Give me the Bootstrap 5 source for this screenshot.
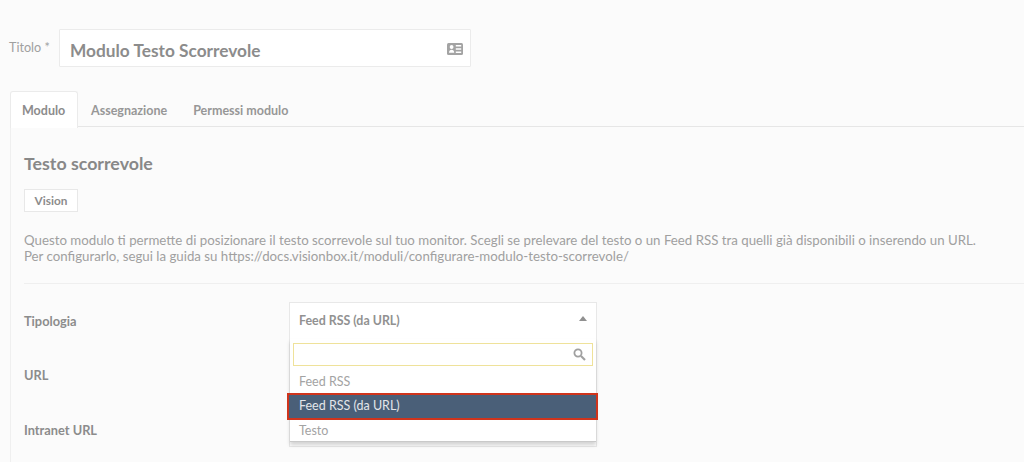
<!DOCTYPE html>
<html lang="it">
<head>
<meta charset="utf-8">
<title>Modulo Testo Scorrevole</title>
<link href="https://cdn.jsdelivr.net/npm/bootstrap@5.3.0/dist/css/bootstrap.min.css" rel="stylesheet">
<style>
html,body{height:462px;overflow:hidden}
body{background:#fbfbfb;font-family:Lato,"Liberation Sans",sans-serif;color:#8a8a8a;font-size:13px;padding:29px 0 0 9px}
.title-row{height:38px;margin-bottom:24px}
.title-label{width:50px;font-size:12.6px;color:#a0a0a0;padding-top:1px}
.title-box{width:412px;height:38px;background:#fff;border:1px solid #ebebeb;padding:0 7px 0 10px;font-size:17.3px;font-weight:700;color:#8c8c8c;border-radius:1px}
.title-text{padding-top:5px}
.title-icon{margin-top:2px}
.tabbar{height:36px;border-bottom:1px solid #e6e6e6;margin-left:1px}
.tabitem{padding:0 11px;line-height:37px;font-size:12.5px;font-weight:700;color:#979797;height:36px;margin-right:2px;border:1px solid transparent;border-bottom:0}
.tabitem.on{background:#fff;border-color:#ebebeb;border-radius:3px 3px 0 0;height:37px;width:68px;margin-right:1px;position:relative;z-index:1;padding:0 11px;color:#8c8c8c}
.panel{margin-left:1px;border-left:1px solid #efefef;padding:26px 0 0 13px}
.panel-title{font-size:17.8px;font-weight:700;color:#888;line-height:20px;margin:0 0 16px}
.tagbox{width:54px;height:23px;line-height:22px;background:#fff;border:1px solid #e8e8e8;font-weight:700;font-size:11.8px;color:#8c8c8c;text-align:center;margin-bottom:20px}
.intro{font-size:13.27px;line-height:16px;color:#a0a0a0;margin:0 0 19px;white-space:nowrap}
.sep{border-top:1px solid #efefef;margin:0 0 18px}
.field{height:54.5px;font-weight:700;font-size:12.8px;color:#8c8c8c}
.field-label{width:265px;padding-top:10px;line-height:17px}
.field-label.low{padding-top:11px}
.select-box{width:308px;height:38px;position:relative;background:#fff;border:1px solid #e8e8e8;font-size:12.4px;color:#919191;padding:0 9px}
.select-text{line-height:36px}
.caret-up{width:0;height:0;border-left:4px solid transparent;border-right:4px solid transparent;border-bottom:5px solid #909090;position:absolute;right:9px;top:13px}
.under-box{position:absolute;left:-1px;top:-1px;width:308px;height:145px;border:1px solid #e8e8e8;z-index:2;pointer-events:none}
.drop-menu{position:absolute;left:0;top:36px;width:306px;height:103px;background:#fff;border-bottom:1px solid #c9c9c9;box-shadow:0 3px 4px rgba(0,0,0,.16);z-index:3;padding:4px 3px 0;font-weight:400}
.drop-search{height:23px;border:1px solid #efe29a;background:#fff;margin-bottom:4px;position:relative}
.drop-search svg{position:absolute;right:6px;top:4px}
.drop-opt{line-height:24px;height:24px;padding-left:6px;color:#a3a3a3;font-size:12.5px}
.drop-opt.sel{background:#4a5f78;color:#e3e6ea;outline:2px solid #d0341c;outline-offset:-1px;height:25px;margin:0 -4px 0 -5px;padding-left:11px;position:relative}
</style>
</head>
<body>
<div class="title-row d-flex align-items-center">
  <div class="title-label">Titolo *</div>
  <div class="title-box d-flex align-items-center justify-content-between">
    <span class="title-text">Modulo Testo Scorrevole</span>
    <svg class="title-icon" width="16" height="12" viewBox="0 0 16 12" aria-hidden="true"><rect width="16" height="12" rx="1.5" fill="#a3a3a3"/><circle cx="4.6" cy="4" r="1.9" fill="#fff"/><path d="M2 9.8c0-2 1.1-3 2.6-3s2.6 1 2.6 3z" fill="#fff"/><path d="M8.8 2.7h5.4M8.8 6h5.4M8.8 9.3h5.4" stroke="#fff" stroke-width="1.4"/></svg>
  </div>
</div>
<div class="tabbar d-flex">
  <div class="tabitem on">Modulo</div>
  <div class="tabitem">Assegnazione</div>
  <div class="tabitem">Permessi modulo</div>
</div>
<div class="panel">
  <h2 class="panel-title">Testo scorrevole</h2>
  <div class="tagbox">Vision</div>
  <p class="intro">Questo modulo ti permette di posizionare il testo scorrevole sul tuo monitor. Scegli se prelevare del testo o un Feed RSS tra quelli già disponibili o inserendo un URL.<br>Per configurarlo, segui la guida su https://docs.visionbox.it/moduli/configurare-modulo-testo-scorrevole/</p>
  <div class="sep"></div>
  <div class="field d-flex">
    <div class="field-label low">Tipologia</div>
    <div class="select-box">
      <div class="select-text">Feed RSS (da URL)</div>
      <span class="caret-up"></span>
      <span class="under-box"></span>
      <div class="drop-menu">
        <div class="drop-search"><svg width="13" height="13" viewBox="0 0 13 13" aria-hidden="true"><circle cx="5" cy="5" r="3.6" fill="none" stroke="#a0a0a0" stroke-width="1.8"/><path d="M8 8l4 4" stroke="#a0a0a0" stroke-width="2.2"/></svg></div>
        <div class="drop-opt">Feed RSS</div>
        <div class="drop-opt sel">Feed RSS (da URL)</div>
        <div class="drop-opt">Testo</div>
      </div>
    </div>
  </div>
  <div class="field d-flex"><div class="field-label">URL</div></div>
  <div class="field d-flex"><div class="field-label low">Intranet URL</div></div>
</div>
<script src="https://cdn.jsdelivr.net/npm/bootstrap@5.3.0/dist/js/bootstrap.bundle.min.js"></script>
</body>
</html>
